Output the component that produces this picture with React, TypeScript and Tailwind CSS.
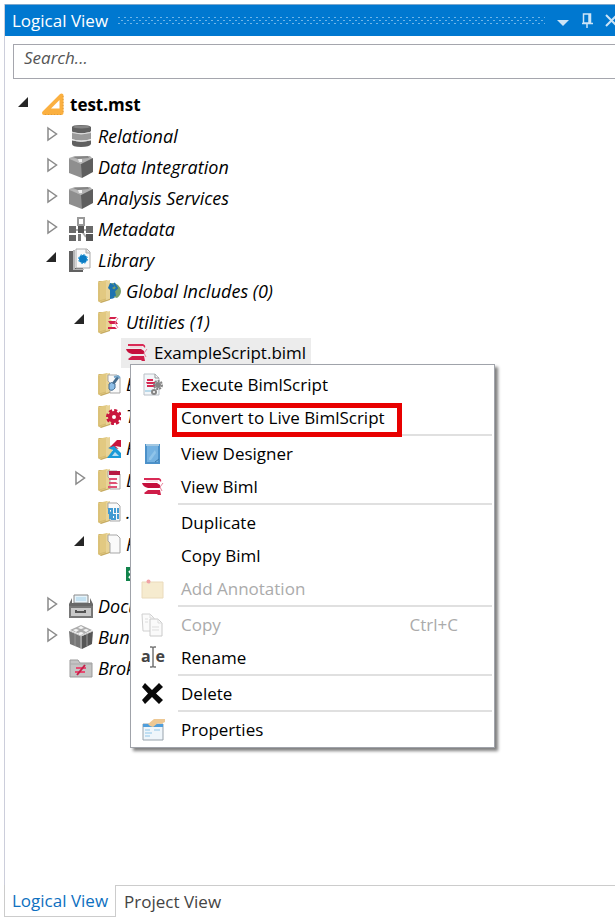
import {FC, ReactNode, useState} from "react";
import clsx from "clsx";

interface IconProps {
  className?: string;
  children?: ReactNode;
}

const Icon: FC<IconProps> = ({className, children}) => (
  <svg
    aria-hidden="true"
    viewBox="0 0 24 24"
    className={clsx("h-6 w-6 shrink-0", className)}
  >
    {children}
  </svg>
);

const ProjectIcon = () => (
  <Icon>
    <path
      d="M20.500 2.500V20H3Z"
      fill="#fbb040"
      stroke="#fbb040"
      strokeWidth="4"
      strokeLinejoin="round"
    />
    <path d="M18.500 7V15.500H10Z" fill="#fff" />
    <path
      d="M22 3V20M4 21.500H21"
      stroke="#dc9a3c"
      strokeWidth="1"
      strokeDasharray="1 2"
    />
  </Icon>
);

const DatabaseIcon = () => (
  <Icon>
    <path d="M3 3Q3 1 12 1T22 3V7Q21 9 12 9T3 7Z" fill="#606060" />
    <ellipse cx="12.500" cy="3" rx="8.500" ry="1.500" fill="#858585" />
    <path d="M3 8Q12 11 22 8V15Q12 18 3 15Z" fill="#9a9a9a" />
    <path d="M3 16Q12 19 22 16V20Q21 23 12 23T3 20Z" fill="#606060" />
    <path d="M3 8.500Q12 11.500 22 8.500" stroke="#ddd" fill="none" />
    <path d="M3 16Q12 19 22 16" stroke="#ddd" fill="none" />
  </Icon>
);

const CubeIcon = () => (
  <Icon>
    <path d="M0 3L6 1L21 1L24 4L13 9L0 5Z" fill="#b0b0b0" />
    <path d="M0 4L13 9V23L0 18Z" fill="#8f8f8f" />
    <path d="M12 9L24 3V17L13 23Z" fill="#5e5e5e" />
    <path d="M4 2L19 1L20 3L9 4Z" fill="#858585" />
    <path d="M2 4L9 4L13 6L12 9Z" fill="#b9b9b9" />
    <path d="M9 4H13V7H10Z" fill="#f0f0f0" />
  </Icon>
);

const MetadataIcon = () => (
  <Icon>
    <path d="M3 13H21M12 6V13L17 20" stroke="#aaa" strokeWidth="2" fill="none" />
    <rect x="9" y="1" width="6" height="7" fill="#fff" stroke="#999" strokeWidth="2" />
    <rect x="0" y="9" width="7" height="7" fill="#6b6b6b" />
    <rect x="9" y="9" width="6" height="7" fill="#555" />
    <rect x="17" y="9" width="7" height="7" fill="#6b6b6b" />
    <rect x="0" y="18" width="7" height="6" fill="#666" />
    <rect x="9" y="17" width="3" height="7" fill="#777" />
    <rect x="17" y="17" width="7" height="7" fill="#555" />
  </Icon>
);

const LibraryIcon = () => (
  <Icon>
    <path d="M0 3H4V20H14V24H0Z" fill="#616161" />
    <path d="M4 2H6V21H15V22H4Z" fill="#b4b4b4" />
    <path d="M7 1H18L21 4V20H7Z" fill="#f8f8f8" stroke="#aaa" />
    <path d="M17 1V5H21" fill="#ddd" stroke="#aaa" />
    <circle cx="14" cy="11" r="4" fill="#0b7cc4" />
    <circle
      cx="14"
      cy="11"
      r="4.500"
      fill="none"
      stroke="#32a3dd"
      strokeWidth="1"
      strokeDasharray="2 1.500"
    />
  </Icon>
);

const FolderIcon: FC<IconProps> = ({children}) => (
  <Icon>
    <path d="M2 2H13V21L4 24L1 22V3Z" fill="#c6ab62" />
    <path d="M1 3L10 1L12 3V20L3 23L1 22Z" fill="#e2c981" />
    <path d="M9 2L13 1V9L15 11V19L9 21Z" fill="#e8d396" />
    <path d="M2 4V22L9 20" fill="none" stroke="#d5ba70" />
    {children}
  </Icon>
);

const Page = () => (
  <path
    d="M13 3H20L23 6V21H13V11L11 9V3Z"
    fill="#fafafa"
    stroke="#a7a7a7"
  />
);

const GlobalIcon = () => (
  <FolderIcon>
    <path d="M13 4A8 8 0 0 1 13 20V11L11 9Z" fill="#1d73b0" />
    <path d="M14 4Q23 4 24 12Q24 16 20 19L17 18L18 11L15 9L18 7Z" fill="#79a06a" />
    <path d="M17 4L20 9L17 12L18 17" fill="none" stroke="#1d73b0" strokeWidth="2" />
  </FolderIcon>
);

const UtilitiesIcon = () => (
  <FolderIcon>
    <path d="M13 7H20L18 9H12ZM11 11H19L21 14H13ZM11 17H18L20 19H11Z" fill="#d31f4b" />
    <path d="M18 13L21 8M18 13L21 18" stroke="#ed87a0" />
  </FolderIcon>
);

const ExtensionIcon = () => (
  <FolderIcon>
    <Page />
    <path d="M21 5L16 12" stroke="#466d8e" strokeWidth="3" />
    <path d="M12 12Q14 9 18 12V16Q15 20 12 17Z" fill="#8dbee7" stroke="#446d91" />
    <path d="M17 5L21 4L23 6" fill="none" stroke="#76a7cb" strokeWidth="2" />
  </FolderIcon>
);

const TransformerIcon = () => (
  <FolderIcon>
    <circle
      cx="17"
      cy="13"
      r="6.500"
      fill="none"
      stroke="#c9163e"
      strokeWidth="3"
      strokeDasharray="3 2"
    />
    <circle cx="17" cy="13" r="4" fill="#fff" stroke="#c9163e" strokeWidth="4" />
  </FolderIcon>
);

const FrameworkIcon = () => (
  <FolderIcon>
    <path d="M12 12L20 4H24V13Z" fill="#c9163e" />
    <path d="M18 10L24 15V11Z" fill="#fff" />
    <path d="M11 12L17 10L24 17V22H10L16 14Z" fill="#1b9bd8" />
    <path d="M18 16L22 20H15Z" fill="#b9def2" />
  </FolderIcon>
);

const LiveIcon = () => (
  <FolderIcon>
    <Page />
    <path d="M12 3H23V7H12Z" fill="#b61942" />
    <path d="M12 10H20V12H12ZM12 14H19L21 16H12ZM11 18H20V20H11Z" fill="#e05175" />
  </FolderIcon>
);

const CodeFilesIcon = () => (
  <FolderIcon>
    <Page />
    <path
      d="M12 9H15V13H12ZM17 9H18V13M20 9H21V13M12 15H13V19M15 15H18V19H15ZM20 15H21V19"
      fill="none"
      stroke="#429bd2"
      strokeWidth="2"
    />
  </FolderIcon>
);

const FilesIcon = () => (
  <FolderIcon>
    <Page />
  </FolderIcon>
);

const SheetIcon = () => (
  <Icon>
    <path d="M1 4H14V18H1Z" fill="#11834b" />
    <path d="M4 8L10 15M10 8L4 15" stroke="#fff" strokeWidth="2" />
    <path d="M14 1H23V22H14" fill="#fff" stroke="#aaa" />
  </Icon>
);

const BimlIcon = () => (
  <Icon>
    <path d="M3 3H18Q21 4 20 7L18 5H3Z" fill="#d92a55" />
    <path d="M1 8H16L19 10V13H7Q2 12 1 8Z" fill="#c50f3c" />
    <path d="M3 18L7 15H19L20 20H17L16 19H4Z" fill="#cf1d49" />
    <path d="M19 12L22 8M19 12L21 16" stroke="#e77f99" strokeWidth="1" />
    <path d="M5 6H17" stroke="#f5c1cd" />
  </Icon>
);

const DrawerIcon = () => (
  <Icon>
    <path d="M5 1H19V9H5Z" fill="#e6f3fa" stroke="#8a8a8a" />
    <path d="M7 4H17M7 6H17" stroke="#a3d0e9" />
    <path d="M3 4L0 10V13H24V10L21 4V9H3Z" fill="#686868" />
    <path d="M1 13H23V23H1Z" fill="#c9c9c9" stroke="#777" strokeWidth="2" />
    <path d="M7 16V18H16V16" fill="none" stroke="#555" strokeWidth="2" />
  </Icon>
);

const BundleIcon = () => (
  <Icon>
    <path d="M1 5L12 0L23 5L13 10Z" fill="#adadad" />
    <path d="M0 6L13 11V24L1 19Z" fill="#777" />
    <path d="M13 11L24 6L23 19L13 24Z" fill="#565656" />
    <path d="M6 8V21M18 8V21" fill="none" stroke="#999" />
    <path d="M12 10V24M1 6L12 11L24 6" fill="none" stroke="#c9c9c9" />
    <path
      d="M4 5L7 4L10 5L7 7ZM14 5L17 4L20 5L17 7ZM9 3L12 1L15 3L12 4ZM9 8L12 7L15 8L12 10Z"
      fill="#f5f5f5"
    />
  </Icon>
);

const BrokenIcon = () => (
  <Icon>
    <path d="M1 4H9L11 7H23V21H1Z" fill="#c4c4c4" stroke="#9b9b9b" />
    <path d="M1 8H23" stroke="#aaa" />
    <path d="M7 11H17V13H7ZM6 15H16V17H6Z" fill="#e64c72" />
    <path d="M16 9L8 19" stroke="#c51f49" strokeWidth="2" />
  </Icon>
);

const ExecuteIcon = () => (
  <Icon>
    <path d="M3 1H14L18 5V22H3Z" fill="#f3f6f9" stroke="#b9c0c7" />
    <path d="M14 1V5H18" fill="none" stroke="#999" />
    <path d="M6 6H12V8H6ZM5 9H14V11H6ZM6 12H14V14H6Z" fill="#d62a53" />
    <path d="M4 18H11" stroke="#b9d9ea" strokeWidth="2" />
    <circle cx="17" cy="12" r="4" fill="none" stroke="#858585" strokeWidth="2" strokeDasharray="2 1" />
    <circle cx="17" cy="12" r="3" fill="#858585" />
    <circle cx="13" cy="19" r="3" fill="#858585" />
    <circle cx="13" cy="19" r="1" fill="#fff" />
  </Icon>
);

const DesignerIcon = () => (
  <Icon>
    <path d="M5 3H18V21H5Z" fill="#75b2e1" stroke="#4c91c9" strokeWidth="2" />
    <path d="M5 3H18" stroke="#a3c8e2" strokeWidth="2" />
    <path d="M8 16L14 8L15 11L10 18H8Z" fill="#8fc4ea" />
    <path d="M14 20L18 17" stroke="#3978aa" strokeWidth="1" />
  </Icon>
);

const AnnotationIcon = () => (
  <Icon>
    <path d="M1 5H22V21H1Z" fill="#f6ebcf" stroke="#eadabb" />
    <path d="M9 7L7 4" stroke="#ddd" />
    <circle cx="7.500" cy="4.500" r="2" fill="#f1a2a5" />
  </Icon>
);

const CopyIcon = () => (
  <Icon>
    <path d="M1 1H9L13 5V18H2Z" fill="#fbfbfb" stroke="#d0d0d0" />
    <path d="M9 6H17L21 10V23H9Z" fill="#fafafa" stroke="#cacaca" />
    <path d="M9 1V5H13M17 6V10H21M4 6H7M4 9H7M11 14H18M11 17H18" fill="none" stroke="#ddd" />
  </Icon>
);

const RenameIcon = () => (
  <span
    aria-hidden="true"
    className="relative flex h-6 w-6 shrink-0 justify-between text-base leading-5 font-bold text-[#444]"
  >
    <span>a</span>
    <span>e</span>
    <svg viewBox="0 0 24 24" className="absolute inset-0 h-6 w-6">
      <path
        d="M9 1H11L12 2L13 1H15M12 2V20M9 21H11L12 20L13 21H15"
        fill="none"
        stroke="#777"
        strokeWidth="1.500"
      />
    </svg>
  </span>
);

const DeleteIcon = () => (
  <Icon>
    <path
      d="M4 1L11 8L18 1L22 5L15 11.500L22 18L18 22L11 15L4 22L1 18L7 11.500L1 5Z"
      fill="#090909"
    />
  </Icon>
);

const PropertiesIcon = () => (
  <Icon>
    <path d="M2 6H22V22H2Z" fill="#eff6fb" stroke="#98a3ac" />
    <path d="M2 6H22V9H2Z" fill="#4f9edb" />
    <path d="M4 12H9M4 15H11M4 18H9M13 12H19" stroke="#bfdef2" strokeWidth="2" />
    <path d="M7 6L13 1H24V4L20 6L17 5L12 9L9 8Z" fill="#edc894" />
  </Icon>
);

interface TreeNode {
  label: string;
  icon: FC;
  open?: boolean;
  tall?: boolean;
  bold?: boolean;
  selected?: boolean;
  hasToggle?: boolean;
  children?: TreeNode[];
}

const TREE: TreeNode = {
  label: "test.mst",
  icon: ProjectIcon,
  bold: true,
  open: true,
  hasToggle: true,
  children: [
    {label: "Relational", icon: DatabaseIcon, hasToggle: true},
    {label: "Data Integration", icon: CubeIcon, hasToggle: true},
    {label: "Analysis Services", icon: CubeIcon, hasToggle: true},
    {label: "Metadata", icon: MetadataIcon, hasToggle: true},
    {
      label: "Library",
      icon: LibraryIcon,
      open: true,
      hasToggle: true,
      children: [
        {label: "Global Includes (0)", icon: GlobalIcon},
        {
          label: "Utilities (1)",
          icon: UtilitiesIcon,
          open: true,
          hasToggle: true,
          children: [
            {label: "ExampleScript.biml", icon: BimlIcon, selected: true},
          ],
        },
        {label: "Extensions", icon: ExtensionIcon, tall: true},
        {label: "Transformers", icon: TransformerIcon, tall: true},
        {label: "Frameworks", icon: FrameworkIcon, tall: true},
        {label: "Live Scripts", icon: LiveIcon, tall: true, hasToggle: true},
        {label: ".NET Code", icon: CodeFilesIcon, tall: true},
        {
          label: "Files",
          icon: FilesIcon,
          open: true,
          hasToggle: true,
          children: [{label: "Data.xlsx", icon: SheetIcon}],
        },
      ],
    },
    {label: "Documentation", icon: DrawerIcon, hasToggle: true},
    {label: "Bundles", icon: BundleIcon, hasToggle: true},
    {label: "Broken Files", icon: BrokenIcon},
  ],
};

const TreeItem: FC<{node: TreeNode}> = ({node}) => {
  const [open, setOpen] = useState(!!node.open);
  const NodeIcon = node.icon;

  return (
    <li>
      <div className={clsx("flex items-center", node.tall ? "h-8" : "h-[31px]")}>
        {node.hasToggle ? (
          <button
            type="button"
            aria-label={"Toggle " + node.label}
            aria-expanded={open}
            className="h-6 w-6 shrink-0"
            onClick={() => setOpen(!open)}
          >
            <svg viewBox="0 0 24 24" className="h-6 w-6">
              {open ? (
                <path d="M11 4V14H1Z" fill="#262626" />
              ) : (
                <path d="M3 4L11.500 10L3 16Z" fill="#fff" stroke="#8a8a8a" strokeWidth="1.500" />
              )}
            </svg>
          </button>
        ) : (
          <span className="w-6 shrink-0" />
        )}
        <div
          className={clsx(
            "flex items-center gap-[5px]",
            node.selected && "-ml-1 h-[30px] bg-[#ececec] pr-[5px] pl-1"
          )}
        >
          <NodeIcon />
          <span
            className={clsx(
              "whitespace-nowrap",
              node.bold && "font-bold",
              !node.bold && !node.selected && "text-lg leading-6 italic"
            )}
          >
            {node.label}
          </span>
        </div>
      </div>
      {open && node.children && (
        <ul className="pl-7">
          {node.children.map((child) => (
            <TreeItem key={child.label} node={child} />
          ))}
        </ul>
      )}
    </li>
  );
};

interface MenuEntry {
  label: string;
  icon?: FC;
  shortcut?: string;
  disabled?: boolean;
  highlighted?: boolean;
}

const MENU: MenuEntry[][] = [
  [
    {label: "Execute BimlScript", icon: ExecuteIcon},
    {label: "Convert to Live BimlScript", highlighted: true},
  ],
  [
    {label: "View Designer", icon: DesignerIcon},
    {label: "View Biml", icon: BimlIcon},
  ],
  [
    {label: "Duplicate"},
    {label: "Copy Biml"},
    {label: "Add Annotation", icon: AnnotationIcon, disabled: true},
  ],
  [
    {label: "Copy", icon: CopyIcon, shortcut: "Ctrl+C", disabled: true},
    {label: "Rename", icon: RenameIcon},
  ],
  [{label: "Delete", icon: DeleteIcon}],
  [{label: "Properties", icon: PropertiesIcon}],
];

const ContextMenu = () => (
  <div
    role="menu"
    className="absolute top-[364px] left-[130px] w-[365px] border border-[#a0a3aa] bg-white pt-[3px] pb-px shadow-[3px_3px_3px_#808080]"
  >
    {MENU.map((group, i) => (
      <div key={group[0].label} role="group">
        {i > 0 && (
          <div className="mr-[2px] mb-px ml-[47px] h-[2px] bg-[#e0e0e0]" />
        )}
        {group.map(({label, icon: EntryIcon, shortcut, disabled, highlighted}) => (
          <button
            key={label}
            type="button"
            role="menuitem"
            disabled={disabled}
            className="relative flex h-[33px] w-full items-center pl-[10px] text-left disabled:text-[#ababab]"
          >
            {EntryIcon ? <EntryIcon /> : <span className="w-6" />}
            <span className="ml-4">{label}</span>
            {shortcut && <span className="mr-9 ml-auto">{shortcut}</span>}
            {highlighted && (
              <span className="absolute top-[2px] left-[41px] h-[34px] w-[230px] border-5 border-[#e80000]" />
            )}
          </button>
        ))}
      </div>
    ))}
  </div>
);

const TitleBar = () => (
  <header className="flex h-8 items-center overflow-hidden border-t border-[#7aa7cd] bg-[#0078d0] pl-[7px] text-white">
    <h1 className="shrink-0">Logical View</h1>
    <svg className="ml-[10px] h-[9px] min-w-0 flex-1" aria-hidden="true">
      <defs>
        <pattern id="grip" width="6" height="6" patternUnits="userSpaceOnUse">
          <path d="M0 1H2V2H0ZM3 4H5V5H3Z" fill="#70b5e8" />
        </pattern>
      </defs>
      <rect width="100%" height="9" fill="url(#grip)" />
    </svg>
    <div className="-mr-1 ml-3 flex shrink-0 items-center gap-3 text-[#cce4f6]">
      <button type="button" aria-label="Window options">
        <svg viewBox="0 0 12 16" className="h-4 w-3">
          <path d="M0 7H12L6 13Z" fill="currentColor" />
        </svg>
      </button>
      <button type="button" aria-label="Auto hide">
        <svg viewBox="0 0 12 16" className="h-4 w-3">
          <path d="M2.500 1H9.500V10H2.500ZM8 1V10M1 10.500H12M6 10V15" fill="none" stroke="currentColor" strokeWidth="1.500" />
        </svg>
      </button>
      <button type="button" aria-label="Close">
        <svg viewBox="0 0 14 16" className="h-4 w-[14px]">
          <path d="M1 2L12 13M12 2L1 13" fill="none" stroke="currentColor" strokeWidth="2" />
        </svg>
      </button>
    </div>
  </header>
);

export default function App() {
  return (
    <div className="relative flex min-h-screen flex-col overflow-hidden bg-white pt-1 pb-[3px] pl-1 font-['Open_Sans','Noto_Sans',sans-serif] text-[17px] leading-6 text-black">
      <section className="flex flex-1 flex-col border-l border-[#cccedb]">
        <TitleBar />
        <div className="pt-2 pl-2">
          <input
            type="text"
            aria-label="Search"
            placeholder="Search..."
            className="block h-[35px] w-full border border-r-0 border-[#a5a6ad] pb-2 pl-[10px] italic outline-none placeholder:text-[#555]"
          />
        </div>
        <ul className="mt-[10px] pl-3">
          <TreeItem node={TREE} />
        </ul>
      </section>
      <nav className="flex h-8">
        <button
          type="button"
          className="border-x border-b border-[#cccccc] px-[7px] text-[#0e70c0]"
        >
          Logical View
        </button>
        <button
          type="button"
          className="flex-1 border-t border-[#cccccc] px-2 text-left text-[#444]"
        >
          Project View
        </button>
      </nav>
      <ContextMenu />
    </div>
  );
}
